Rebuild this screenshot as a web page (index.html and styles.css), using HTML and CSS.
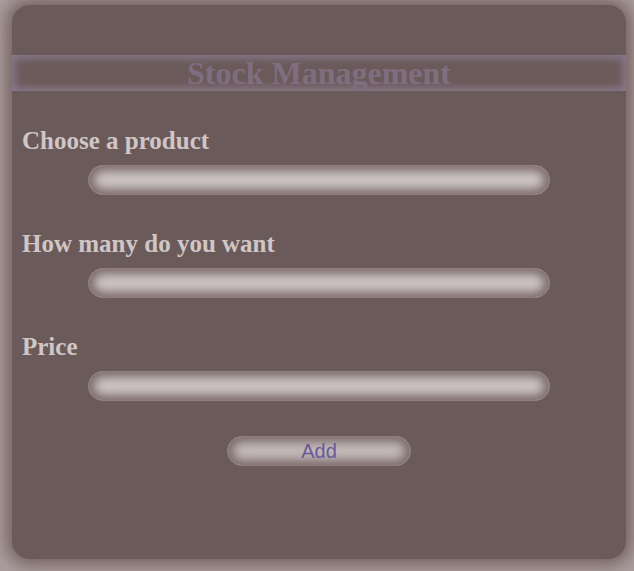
FILE: index.html
```html
<!DOCTYPE html>
<html>
<head>
<meta charset="utf-8">
<link rel="stylesheet" href="styles.css">
</head>
<body>
<div class="card">
  <h1 class="title">Stock Management</h1>
  <form class="form">
    <label class="field">
      <span class="label">Choose a product</span>
      <input class="input" type="text">
    </label>
    <label class="field">
      <span class="label">How many do you want</span>
      <input class="input" type="text">
    </label>
    <label class="field">
      <span class="label">Price</span>
      <input class="input" type="text">
    </label>
    <button class="btn" type="button">Add</button>
  </form>
</div>
</body>
</html>
```
FILE: styles.css
```css
html, body {
  margin: 0;
  padding: 0;
}
body {
  background: #ab9d9d;
  width: 634px;
  height: 571px;
  overflow: hidden;
  padding-top: 5px;
  box-sizing: border-box;
}
.card {
  margin-left: 12px;
  width: 614px;
  height: 554px;
  box-sizing: border-box;
  background: #6b5a5a;
  border-radius: 18px;
  box-shadow: 0 0 16px 6px #756262;
  padding-top: 50px;
}
.title {
  margin: 0;
  height: 36px;
  line-height: 36px;
  text-align: center;
  font-family: "Liberation Serif", serif;
  font-weight: bold;
  font-size: 32px;
  color: #7f6e80;
  background: #6b5a5a;
  box-shadow: inset 0 0 9px 3px #8a7a8d;
}
.form {
  display: flex;
  flex-direction: column;
  padding-top: 35px;
}
.field {
  display: flex;
  flex-direction: column;
  height: 103px;
}
.label {
  padding-left: 10px;
  font-family: "Liberation Serif", serif;
  font-weight: bold;
  font-size: 25px;
  line-height: 29px;
  color: #d0c6c6;
}
.input {
  display: block;
  margin: 10px auto 0;
  width: 462px;
  height: 30px;
  box-sizing: border-box;
  border: 1px solid #8e7e7e;
  border-radius: 15px;
  background: #cbc3c3;
  box-shadow: inset 0 0 10px 5px #7d6b6b;
  outline: none;
}
.btn {
  display: block;
  margin: 1px auto 0;
  width: 184px;
  height: 30px;
  box-sizing: border-box;
  border: 1px solid #8e7e7e;
  border-radius: 15px;
  background: #c2b9b9;
  box-shadow: inset 0 0 10px 5px #7d6b6b;
  font-family: "Liberation Sans", sans-serif;
  font-size: 20px;
  color: #6a5898;
  padding: 0;
  line-height: 28px;
}
```
